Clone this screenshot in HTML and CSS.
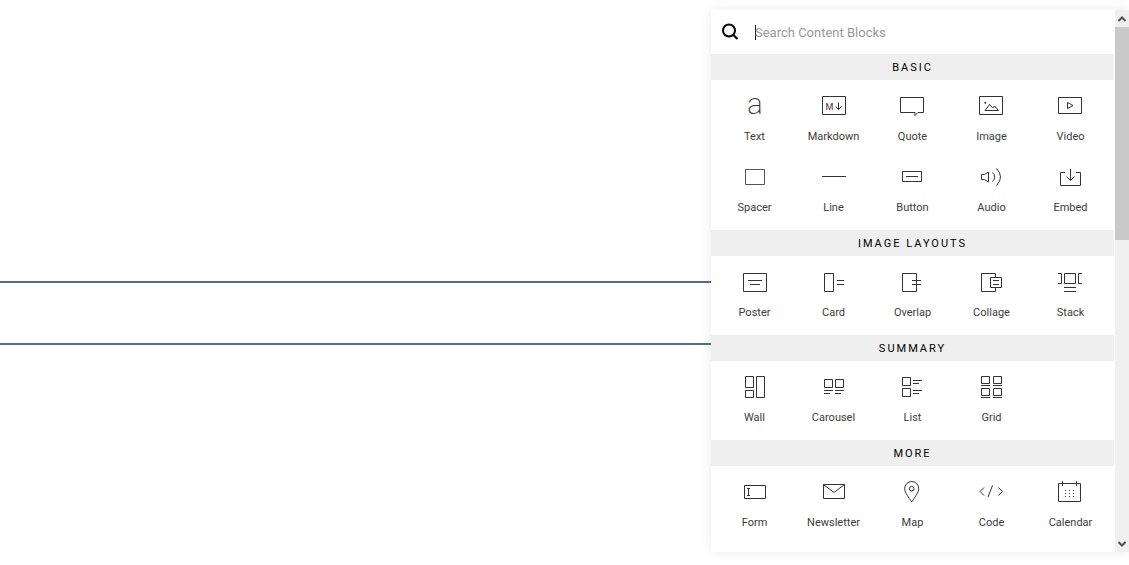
FILE: index.html
```html
<!DOCTYPE html>
<html lang="en">
<head>
<meta charset="utf-8">
<title>Content Blocks</title>
<link rel="stylesheet" href="styles.css">
</head>
<body>
<div class="editor">
  <main class="canvas"><div class="drop-zone"></div></main>
  <aside class="panel">
    <div class="content">
      <label class="search">
        <svg class="search-icon" viewBox="0 0 18 18" aria-hidden="true"><circle cx="8" cy="7.5" r="6"/><path d="M12.2 11.7L16.5 16"/></svg>
        <span class="caret"></span>
        <input class="search-input" type="text" placeholder="Search Content Blocks" aria-label="Search Content Blocks">
      </label>

      <h2 class="heading">BASIC</h2>
      <div class="grid">
        <button class="block"><svg class="icon" viewBox="0 0 33 33"><text class="letter-a" x="17" y="25" text-anchor="middle">a</text></svg>Text</button>
        <button class="block"><svg class="icon" viewBox="0 0 33 33"><path d="M5.500 7.500h23v18h-23zM21.500 13.500v7M18.500 17.500l3 3 3-3"/><text class="letter-m" x="12.500" y="21" text-anchor="middle">M</text></svg>Markdown</button>
        <button class="block"><svg class="icon" viewBox="0 0 33 33"><path d="M4.500 8.500h23v15H22l-3 3v-3H4.500z"/></svg>Quote</button>
        <button class="block"><svg class="icon" viewBox="0 0 33 33"><path d="M4.500 7.500h23v18h-23zM10 21.500L14.700 15.300 17.700 19 19.500 17 23.500 21.500z"/><circle class="solid" cx="10.300" cy="13.800" r="1"/></svg>Image</button>
        <button class="block"><svg class="icon" viewBox="0 0 33 33"><path d="M4.500 8.500h23v16h-23zM13.500 13.500l5.500 3-5.500 3z"/></svg>Video</button>
        <button class="block"><svg class="icon faint" viewBox="0 0 33 33"><path d="M7.500 9.500h19v15h-19z"/></svg>Spacer</button>
        <button class="block"><svg class="icon" viewBox="0 0 33 33"><path d="M5 16.500h24"/></svg>Line</button>
        <button class="block"><svg class="icon" viewBox="0 0 33 33"><path d="M6.500 11.500h19v10h-19zM10 16.500h12"/></svg>Button</button>
        <button class="block"><svg class="icon" viewBox="0 0 33 33"><path d="M6.500 14.500h3l4-2.500v10l-4-2.500h-3zM17.500 12.500q4.500 4.500 0 9M21.500 8.500q8 8.500 0 17"/></svg>Audio</button>
        <button class="block"><svg class="icon" viewBox="0 0 33 33"><path d="M11 12.500H6.500v13h20v-13H22M16.500 9v11.500M12.500 16.500l4 4 4-4"/></svg>Embed</button>
      </div>

      <h2 class="heading">IMAGE LAYOUTS</h2>
      <div class="grid">
        <button class="block"><svg class="icon" viewBox="0 0 33 33"><path d="M5.500 8.500h23v18h-23zM10 15.500h14M12 19.500h10"/></svg>Poster</button>
        <button class="block"><svg class="icon" viewBox="0 0 33 33"><path d="M7.500 8.500h9v18h-9zM20 15.500h7M20 19.500h7"/></svg>Card</button>
        <button class="block"><svg class="icon" viewBox="0 0 33 33"><path d="M6.500 8.500h14v18h-14zM16 15.500h9M16 19.500h9"/></svg>Overlap</button>
        <button class="block"><svg class="icon" viewBox="0 0 33 33"><path d="M20.500 12.500v-4h-14v18h14v-4M15.500 12.500h11v10h-11zM18 15.500h6M18 19.500h6"/></svg>Collage</button>
        <button class="block"><svg class="icon" viewBox="0 0 33 33"><path d="M10.500 8.500h11v10h-11zM4 8.500h3.500v10H4M28 8.500h-3.500v10H28M10 22.500h12M10 26.500h12"/></svg>Stack</button>
      </div>

      <h2 class="heading">SUMMARY</h2>
      <div class="grid">
        <button class="block"><svg class="icon" viewBox="0 0 33 33"><path d="M7.500 6.500h8v11h-8zM7.500 20.500h8v7h-8zM18.500 6.500h8v21h-8z"/></svg>Wall</button>
        <button class="block"><svg class="icon" viewBox="0 0 33 33"><path d="M7.500 9.500h8v8h-8zM18.500 9.500h8v8h-8zM7 20.500h9M18 20.500h9M7 23.500h6M18 23.500h6"/></svg>Carousel</button>
        <button class="block"><svg class="icon" viewBox="0 0 33 33"><path d="M6.500 7.500h8v8h-8zM6.500 18.500h8v8h-8zM17 10.500h9M17 13.500h6M17 20.500h9M17 23.500h6"/></svg>List</button>
        <button class="block"><svg class="icon" viewBox="0 0 33 33"><path d="M6.500 6.500h8v7h-8zM18.500 6.500h8v7h-8zM6 15.500h9M18 15.500h9M6.500 18.500h8v7h-8zM18.500 18.500h8v7h-8zM6 27.500h9M18 27.500h9"/></svg>Grid</button>
      </div>

      <h2 class="heading">MORE</h2>
      <div class="grid">
        <button class="block"><svg class="icon" viewBox="0 0 33 33"><path d="M6.500 10.500h21v13h-21zM9 13.500h3M9 20.500h3M10.500 13.500v7"/></svg>Form</button>
        <button class="block"><svg class="icon" viewBox="0 0 33 33"><path d="M6.500 9.500h21v14h-21zM6.500 9.500L17 17.500 27.500 9.500"/></svg>Newsletter</button>
        <button class="block"><svg class="icon" viewBox="0 0 33 33"><path d="M15.700 27C13 22.500 8.700 18 8.700 13.500a7 7 0 0 1 14 0C22.700 18 18.400 22.500 15.700 27z"/><circle cx="15.700" cy="13.700" r="2.300"/></svg>Map</button>
        <button class="block"><svg class="icon" viewBox="0 0 33 33"><path d="M9 12.500l-4 4 4 4M17.500 10.500l-4.500 11.500M23.500 12.500l4 4-4 4"/></svg>Code</button>
        <button class="block"><svg class="icon" viewBox="0 0 33 33"><path d="M4.500 8.500h22v18h-22zM8.500 6v5M22.500 6v5"/><path stroke-dasharray="1 3" d="M11 15.500h9M11 18.500h9M11 21.500h9"/></svg>Calendar</button>
      </div>
    </div>
    <div class="scrollbar" aria-hidden="true">
      <svg class="arrow" viewBox="0 0 14 17"><path d="M3.500 11l3.500-3.500 3.500 3.500"/></svg>
      <div class="track"><div class="thumb"></div></div>
      <svg class="arrow" viewBox="0 0 14 17"><path d="M3.500 7l3.500 3.500L10.500 7"/></svg>
    </div>
  </aside>
</div>
</body>
</html>
```
FILE: styles.css
```css
* { box-sizing: border-box; }

body {
  margin: 0;
  background: #fff;
  font-family: Roboto, "Liberation Sans", sans-serif;
  color: #3c3c3c;
}

.editor {
  display: flex;
  align-items: flex-start;
  min-height: 100vh;
  overflow: hidden;
}

.canvas {
  flex: 1;
  padding-top: 281px;
}

.drop-zone {
  height: 64px;
  border-top: 2px solid #526c94;
  border-bottom: 2px solid #4a6f8f;
}

.panel {
  display: flex;
  width: 418px;
  margin-top: 10px;
  background: #fff;
  box-shadow: 0 0 12px rgba(0, 0, 0, 0.08);
}

.content {
  flex: 1;
  margin-right: 1px;
  padding-bottom: 7px;
}

.search {
  display: flex;
  align-items: center;
  height: 44px;
  padding: 0 10px;
}

.search-icon {
  width: 18px;
  height: 18px;
  margin-right: 16px;
  fill: none;
  stroke: #000;
  stroke-width: 2;
}

.caret {
  width: 1px;
  height: 15px;
  margin-right: -1px;
  background: #222;
}

.search-input {
  flex: 1;
  padding: 2px 0 0;
  border: 0;
  outline: 0;
  background: none;
  font: 13px/20px Roboto, "Liberation Sans", sans-serif;
  color: #222;
}

.search-input::placeholder { color: #999; opacity: 1; }

.heading {
  margin: 0;
  padding-top: 2px;
  background: #efefef;
  font-size: 11px;
  line-height: 24px;
  font-weight: 400;
  letter-spacing: 2px;
  text-align: center;
  color: #000;
}

.grid {
  display: grid;
  grid-template-columns: repeat(5, 1fr);
  padding: 4px;
}

.block {
  display: flex;
  flex-direction: column;
  align-items: center;
  height: 71px;
  padding: 5px 0 0;
  border: 0;
  background: none;
  font: 11px/16px Roboto, "Liberation Sans", sans-serif;
  color: #3c3c3c;
}

.icon {
  width: 33px;
  height: 33px;
  margin-bottom: 7px;
  overflow: visible;
  fill: none;
  stroke: #333;
  stroke-width: 1;
}

.faint { stroke: #555; }
.solid { fill: #333; stroke: none; }

.letter-a {
  font: 200 29px Roboto, sans-serif;
  fill: #333;
  stroke: none;
}

.letter-m {
  font: 400 9px Roboto, sans-serif;
  fill: #333;
  stroke: none;
}

.scrollbar {
  display: flex;
  flex-direction: column;
  width: 14px;
  background: #f0f0f0;
}

.arrow {
  width: 14px;
  height: 17px;
  fill: none;
  stroke: #505050;
  stroke-width: 2;
}

.track { flex: 1; }

.thumb {
  height: 42%;
  background: #c9c9c9;
}
```
